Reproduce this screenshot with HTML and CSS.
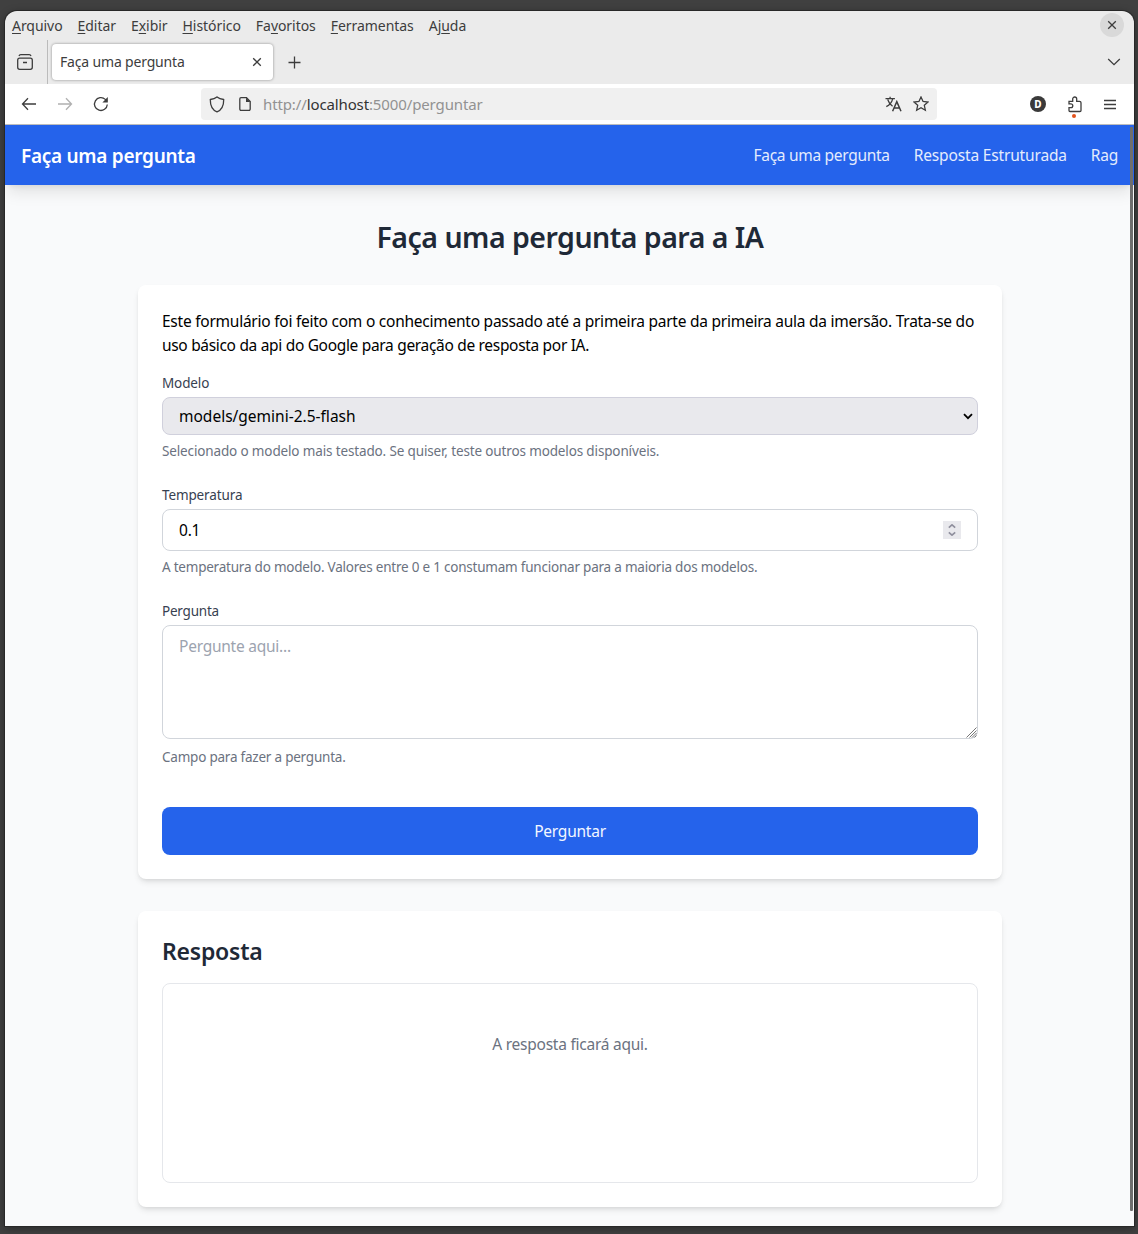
FILE: index.html
```html
<!DOCTYPE html>
<html lang="pt-BR">
<head>
<meta charset="utf-8">
<title>Faça uma pergunta</title>
<link rel="stylesheet" href="styles.css">
</head>
<body>
<div class="window">
  <div class="menubar">
    <nav class="menus">
      <span><u>A</u>rquivo</span>
      <span><u>E</u>ditar</span>
      <span>E<u>x</u>ibir</span>
      <span><u>H</u>istórico</span>
      <span>Fa<u>v</u>oritos</span>
      <span><u>F</u>erramentas</span>
      <span>Aj<u>u</u>da</span>
    </nav>
    <span class="close"><svg width="24" height="24" viewBox="0 0 24 24"><path d="M8.200 8.200l7.600 7.600M15.800 8.200l-7.600 7.600"/></svg></span>
  </div>
  <div class="tabbar">
    <div class="tabview"><svg width="18" height="18" viewBox="0 0 18 18"><path d="M3 3C3.300 2 4 1.700 4.800 1.700h8.400C14 1.700 14.700 2 15 3"/><rect x="1.700" y="5.200" width="14.600" height="11.100" rx="2"/><path d="M7 9.500h4"/></svg></div>
    <div class="tab"><span class="tabtitle">Faça uma pergunta</span><svg width="10" height="10" viewBox="0 0 10 10"><path d="M1.200 1.200l7.600 7.600M8.800 1.200l-7.600 7.600"/></svg></div>
    <svg class="plus" width="13" height="13" viewBox="0 0 13 13"><path d="M6.500 .5v12M.5 6.500h12"/></svg>
    <svg class="chev" width="14" height="8" viewBox="0 0 14 8"><path d="M1.200 1l5.800 5.600L12.800 1"/></svg>
  </div>
  <div class="toolbar">
    <div class="navbtns">
      <svg width="16" height="14" viewBox="0 0 16 14"><path d="M15 7H1.700M7 1.300L1.500 7 7 12.700"/></svg>
      <svg class="off" width="16" height="14" viewBox="0 0 16 14"><path d="M1 7h13.300M9 1.300L14.500 7 9 12.700"/></svg>
      <svg width="16" height="16" viewBox="0 0 16 16"><path d="M14.300 8.500A6.400 6.400 0 1 1 12.300 3.400L14 5"/><path class="fill" d="M14.800 1v5.400H9.400z"/></svg>
    </div>
    <div class="urlbar">
      <svg class="shield" width="16" height="17" viewBox="0 0 16 17"><path d="M8 .9C6.200 2.400 4 3.200 1.300 3.500 1.200 8.800 2.400 13.600 8 15.900c5.600-2.300 6.800-7.100 6.700-12.400C12 3.200 9.800 2.400 8 .9z"/></svg>
      <svg class="doc" width="14" height="16" viewBox="0 0 14 16"><path d="M8.500 1.700H3a1.200 1.200 0 0 0-1.200 1.200v10.200A1.200 1.200 0 0 0 3 14.300h8a1.200 1.200 0 0 0 1.200-1.200V5.400z"/><path class="fill" d="M8 1.700v4.300h4.500z"/></svg>
      <span class="url"><i>http://</i>localhost<i>:5000/perguntar</i></span>
      <svg class="translate" width="17" height="16" viewBox="0 0 17 16"><path d="M.5 2.700h9.400M5.100.700v2M7.700 2.800C6.900 6 4.500 8.900 1.300 10.600M2.700 3.500c.8 2.700 2.400 5 4.900 6.700"/><path d="M7.600 15.200L11.800 5.700l4.200 9.500M9.100 12h5.400" stroke-width="1.500"/></svg>
      <svg class="star" width="16" height="16" viewBox="0 0 16 16"><path d="M8 1l2.050 4.500 4.950.55-3.700 3.300 1.050 4.850L8 11.800l-4.350 2.400L4.700 9.350 1 6.050l4.950-.55z"/></svg>
    </div>
    <div class="tools">
      <span class="avatar">D</span>
      <span class="ext"><svg width="14" height="17" viewBox="0 0 14 17"><path d="M1 5.300h3.700V3a2 2 0 0 1 4 0v2.300h2.800a1.500 1.500 0 0 1 1.500 1.500v7.700a1 1 0 0 1-1 1H2a1 1 0 0 1-1-1v-2.800h1.900a1.900 1.900 0 0 0 0-3.800H1z"/></svg><b class="dot"></b></span>
      <svg width="12" height="11" viewBox="0 0 12 11"><path d="M0 1.500h12M0 5.500h12M0 9.500h12"/></svg>
    </div>
  </div>
  <div class="page">
    <header class="header">
      <span class="brand">Faça uma pergunta</span>
      <nav class="links"><span class="link-ask">Faça uma pergunta</span><span class="link-structured">Resposta Estruturada</span><span class="link-rag">Rag</span></nav>
    </header>
    <main class="main">
      <h1>Faça uma pergunta para a IA</h1>
      <section class="card">
        <p class="intro">Este formulário foi feito com o conhecimento passado até a primeira parte da primeira aula da imersão. Trata-se do<br><span class="second">uso básico da api do Google para geração de resposta por IA.</span></p>
        <div class="label">Modelo</div>
        <div class="field select"><span>models/gemini-2.5-flash</span><svg width="10" height="7" viewBox="0 0 10 7"><path d="M1 1.200l4 4 4-4"/></svg></div>
        <div class="help help-model">Selecionado o modelo mais testado. Se quiser, teste outros modelos disponíveis.</div>
        <div class="label">Temperatura</div>
        <div class="field number"><span>0.1</span><span class="spin"><svg width="8" height="12" viewBox="0 0 8 12"><path d="M.8 3.700L4 .8l3.200 2.900M.8 8.300L4 11.200l3.200-2.900"/></svg></span></div>
        <div class="help">A temperatura do modelo. Valores entre 0 e 1 constumam funcionar para a maioria dos modelos.</div>
        <div class="label label-ask">Pergunta</div>
        <div class="field area"><span>Pergunte aqui...</span><svg width="11" height="11" viewBox="0 0 11 11"><path d="M.5 10.500l10-10M3.500 10.500l7-7M6 10.500l4.500-4.500M8.500 10.500l2-2"/></svg></div>
        <div class="help last">Campo para fazer a pergunta.</div>
        <div class="button">Perguntar</div>
      </section>
      <section class="card">
        <h2>Resposta</h2>
        <div class="answer">A resposta ficará aqui.</div>
      </section>
    </main>
    <div class="scroll"></div>
  </div>
</div>
</body>
</html>
```
FILE: styles.css
```css
* { box-sizing: border-box; }
body {
  margin: 0; height: 1234px; overflow: hidden; padding: 11px 4px 8px 5px;
  background: #404040; font-family: "Noto Sans", sans-serif;
}
svg { display: block; flex: none; fill: none; stroke: #3d3d3d; stroke-width: 1.3; }
.fill { fill: #3d3d3d; stroke: none; }
.window {
  height: 1215px; display: flex; flex-direction: column; overflow: hidden;
  border-radius: 12px 12px 0 0; background: #ebebeb; box-shadow: 0 0 0 1px #282828, 0 2px 8px rgba(0,0,0,.4);
}
.menubar { flex: none; height: 29px; display: flex; justify-content: space-between; padding: 2px 10px 0 7px; }
.menus { display: flex; gap: 15px; font-size: 14px; line-height: 26px; color: #3d3d3d; letter-spacing: -.05px; }
.menus u { text-decoration-thickness: 1px; text-underline-offset: 2px; }
.close { width: 24px; height: 24px; border-radius: 50%; background: #d9d9d9; }
.tabbar { flex: none; height: 44px; display: flex; align-items: center; }
.tabview { width: 43px; height: 44px; border-right: 1px solid #bbb; padding: 13px 0 0 11px; }
.tab {
  width: 221px; height: 36px; margin-left: 4px; padding: 0 11px 0 8px; border-radius: 4px; background: #fff;
  box-shadow: 0 0 3px rgba(0,0,0,.4); display: flex; align-items: center; justify-content: space-between;
  font-size: 14px; color: #3d3d3d; letter-spacing: -.17px;
}
.tabtitle { padding-bottom: 2px; }
.plus { margin-left: 15px; }
.chev { margin-left: auto; margin-right: 13px; }
.toolbar { flex: none; height: 41px; background: #fff; border-bottom: 1px solid #bdbdbd; display: flex; align-items: center; }
.navbtns { width: 196px; padding-left: 16px; display: flex; gap: 20px; align-items: center; }
.off { opacity: .4; }
.urlbar { width: 736px; height: 32px; border-radius: 4px; background: #f0f0f0; display: flex; align-items: center; padding: 0 8px; }
.doc { margin-left: 13px; }
.url { margin-left: 11px; font-size: 15px; color: #333; letter-spacing: -.12px; }
.url i { font-style: normal; color: #929292; }
.translate { margin-left: auto; }
.star { margin-left: 11px; }
.tools { flex: 1; display: flex; align-items: center; justify-content: space-between; padding: 0 18px 0 93px; }
.avatar { width: 16px; height: 16px; border-radius: 50%; background: #3a3a3a; color: #fff; font: 800 10px/16px "Noto Sans", sans-serif; text-align: center; }
.ext { position: relative; }
.dot { position: absolute; left: 4px; top: 18px; width: 4px; height: 4px; border-radius: 2px; background: #e2521d; }
.page { flex: 1; position: relative; background: #f9fafb; font-size: 15.5px; line-height: 24px; letter-spacing: -.24px; }
.header {
  height: 60px; padding: 2px 16px 0; background: #2563eb; color: #fff; display: flex; align-items: center; justify-content: space-between;
  box-shadow: 0 10px 15px -3px rgba(0,0,0,.1), 0 4px 6px -4px rgba(0,0,0,.1);
}
.brand { font-size: 19px; font-weight: 600; letter-spacing: -.28px; }
.links { display: flex; gap: 24px; padding-bottom: 2px; color: #e4ecfd; }
.link-ask { letter-spacing: -.29px; }
.link-structured { letter-spacing: -.16px; }
.main { width: 864px; margin: 0 0 0 133px; padding-top: 34px; }
h1 { margin: 0 0 30px; font-size: 28.5px; line-height: 36px; font-weight: 600; color: #1f2937; text-align: center; letter-spacing: -.51px; }
.card { padding: 24px; margin-bottom: 32px; background: #fff; border-radius: 8px; box-shadow: 0 4px 6px -1px rgba(0,0,0,.1), 0 2px 4px -2px rgba(0,0,0,.1); }
.intro { margin: 0 0 16px; color: #000; white-space: nowrap; letter-spacing: -.245px; }
.second { letter-spacing: -.32px; }
.label { font-size: 13.5px; line-height: 20px; margin-bottom: 4px; color: #374151; letter-spacing: -.12px; }
.label-ask { letter-spacing: -.22px; }
.field { border: 1px solid #d1d5db; border-radius: 8px; padding: 0 16px; display: flex; align-items: center; justify-content: space-between; color: #000; }
.select { height: 38px; padding-right: 4px; background: #e9e9ed; border-color: #d0d0dc; letter-spacing: 0; }
.select svg { stroke: #000; stroke-width: 1.8; }
.number { height: 42px; }
.spin { width: 18px; height: 18px; background: #e9e9ed; padding: 3px 5px; }
.spin svg { stroke: #8f8f9d; stroke-width: 1.6; }
.area { height: 114px; padding: 8px 0 0 16px; align-items: flex-start; color: #9ca3af; }
.area svg { align-self: flex-end; stroke: #777; stroke-width: 1; }
.help { font-size: 13.5px; line-height: 20px; margin: 6px 0 24px; color: #6b7280; letter-spacing: -.22px; }
.help-model { letter-spacing: -.14px; }
.help.last { margin: 8px 0 40px; }
.button { height: 48px; border-radius: 8px; background: #2563eb; color: #f3f7ff; text-align: center; line-height: 48px; }
h2 { margin: 0 0 16px; font-size: 23px; line-height: 32px; font-weight: 600; color: #1f2937; letter-spacing: -.22px; }
.answer { height: 200px; border: 1px solid #e5e7eb; border-radius: 8px; padding-top: 48px; text-align: center; color: #6b7280; }
.scroll { position: absolute; right: 1px; top: 2px; width: 3px; height: 1084px; border-radius: 1px; background: #6e6e6e; }
```
